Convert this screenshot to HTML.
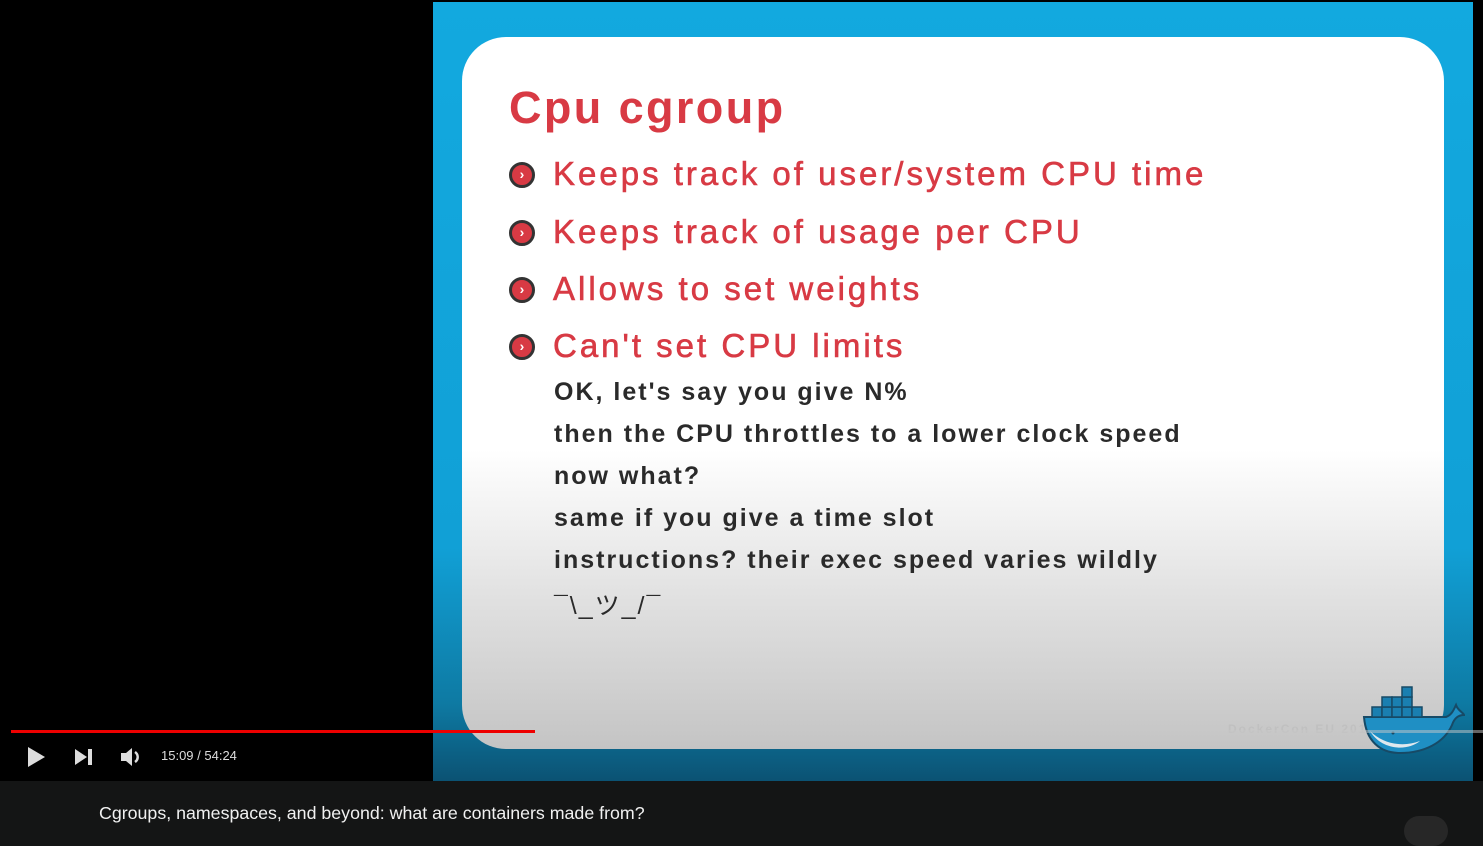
<!DOCTYPE html>
<html><head><style>
*{margin:0;padding:0;box-sizing:border-box}
body{width:1483px;height:825px;background:#141515;position:relative;overflow:hidden;font-family:"Liberation Sans",sans-serif}
#vid{position:absolute;left:0;top:0;width:1483px;height:781px;background:#000}
#slide{position:absolute;left:433px;top:2px;width:1040px;height:779px;background:linear-gradient(#12a9df 0%,#11a0d6 70%,#0e7aa3 90%,#0b5273 100%)}
#card{position:absolute;left:462px;top:37px;width:982px;height:712px;border-radius:44px;background:linear-gradient(#fff 0%,#fff 58%,#e2e2e2 78%,#c4c4c4 100%)}
.t{position:absolute;color:#d83a44;font-weight:bold;white-space:nowrap}
.b{position:absolute;left:553px;color:#d83a44;font-size:33px;letter-spacing:3px;white-space:nowrap;-webkit-text-stroke:0.6px #d83a44}
.d{position:absolute;left:509px;width:26px;height:26px;border-radius:50%;background:#d83a44;border:3px solid #333;color:#fff;font-size:14px;font-weight:bold;text-align:center;line-height:19px}
.s{position:absolute;left:554px;color:#2a2a2a;font-size:25px;font-weight:bold;letter-spacing:2px;white-space:nowrap}
</style></head><body>
<div id="vid"></div>
<div id="slide"></div>
<div id="card"></div>
<div class="t" style="left:509px;top:82px;font-size:45px;letter-spacing:2.4px">Cpu cgroup</div>
<div class="d" style="top:162px">›</div><div class="b" style="top:155px">Keeps track of user/system CPU time</div>
<div class="d" style="top:220px">›</div><div class="b" style="top:213px">Keeps track of usage per CPU</div>
<div class="d" style="top:277px">›</div><div class="b" style="top:270px">Allows to set weights</div>
<div class="d" style="top:334px">›</div><div class="b" style="top:327px">Can't set CPU limits</div>
<div class="s" style="top:378px">OK, let's say you give N%</div>
<div class="s" style="top:420px">then the CPU throttles to a lower clock speed</div>
<div class="s" style="top:462px">now what?</div>
<div class="s" style="top:504px">same if you give a time slot</div>
<div class="s" style="top:546px">instructions? their exec speed varies wildly</div>
<div class="s" style="top:586px;font-family:'Liberation Sans','Noto Sans CJK JP',sans-serif;font-weight:normal">¯\_ツ_/¯</div>
<div style="position:absolute;left:1228px;top:722px;color:#bbb;font-size:12px;font-weight:bold;letter-spacing:2px;opacity:.6">DockerCon EU 2015</div>
<svg style="position:absolute;left:1360px;top:685px" width="106" height="70" viewBox="0 0 106 70">
<path d="M4 32 H86 C92 30 94 24 96 20 C98 26 104 28 104 30 C98 30 94 34 92 40 C84 58 64 68 40 68 C20 68 6 56 4 32Z" fill="#1f8fc4" stroke="#174a66" stroke-width="2"/>
<path d="M10 46 C24 60 44 62 60 56 C48 66 22 66 10 46Z" fill="#dfe8ee"/>
<g fill="#1a7fb0" stroke="#174a66" stroke-width="1.5">
<rect x="12" y="22" width="10" height="10"/><rect x="22" y="22" width="10" height="10"/><rect x="32" y="22" width="10" height="10"/><rect x="42" y="22" width="10" height="10"/><rect x="52" y="22" width="10" height="10"/>
<rect x="22" y="12" width="10" height="10"/><rect x="32" y="12" width="10" height="10"/><rect x="42" y="12" width="10" height="10"/>
<rect x="42" y="2" width="10" height="10"/></g>
<circle cx="33" cy="48" r="1.5" fill="#174a66"/></svg>
<div style="position:absolute;left:11px;top:730px;width:1472px;height:3px;background:rgba(200,200,200,.5)"></div>
<div style="position:absolute;left:11px;top:730px;width:524px;height:3px;background:#e00"></div>
<svg style="position:absolute;left:26px;top:746px" width="20" height="22"><path d="M2 1 L19 11 L2 21Z" fill="#ddd"/></svg>
<svg style="position:absolute;left:74px;top:748px" width="20" height="18"><path d="M1 1 L13 9 L1 17Z M14 1 H18 V17 H14Z" fill="#ddd"/></svg>
<svg style="position:absolute;left:120px;top:746px" width="22" height="22"><path d="M1 7 H6 L12 2 V20 L6 15 H1Z" fill="#ddd"/><path d="M15 6 A6 6 0 0 1 15 16" stroke="#ddd" stroke-width="2.5" fill="none"/></svg>
<div style="position:absolute;left:161px;top:748px;color:#ddd;font-size:13px">15:09 / 54:24</div>
<div style="position:absolute;left:99px;top:803px;color:#f1f1f1;font-size:17.8px">Cgroups, namespaces, and beyond: what are containers made from?</div>
<div style="position:absolute;left:1404px;top:816px;width:44px;height:30px;border-radius:15px;background:#272727"></div>
</body></html>
